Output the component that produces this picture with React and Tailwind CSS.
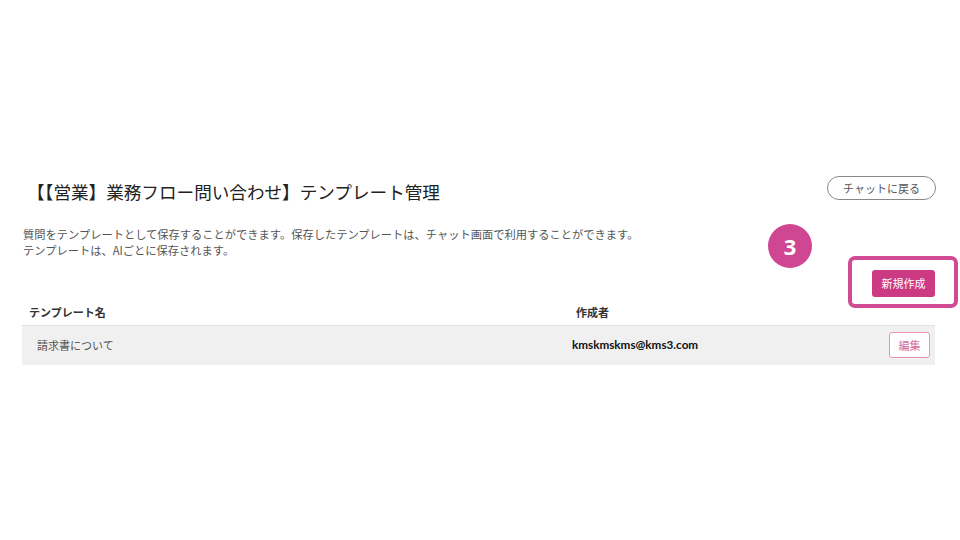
const FONT = { fontFamily: '"Noto Sans CJK JP", "Noto Sans", sans-serif' };

const rows = [{ id: 1, name: '請求書について', author: 'kmskmskms@kms3.com' }];

export default function App() {
  return (
    <div className="w-full min-h-[540px] bg-white text-[#333]" style={FONT}>
      <div className="ml-[22px] w-[913px] pt-[176px]">
        {/* header */}
        <div className="flex items-start justify-between">
          <h1 className="mt-[4px] pl-[5px] text-[17.6px] leading-[24px] font-normal text-[#222]">
            【【営業】業務フロー問い合わせ】テンプレート管理
          </h1>
          <button className="mr-[-1px] h-[24px] w-[109px] rounded-full border border-[#888] bg-white text-[11px] text-[#555]">
            チャットに戻る
          </button>
        </div>

        <div className="mt-[22px] pl-[1px] text-[11.25px] leading-[16px] text-[#555]">
          <p>質問をテンプレートとして保存することができます。保存したテンプレートは、チャット画面で利用することができます。</p>
          <p>テンプレートは、AIごとに保存されます。</p>
        </div>

        <div className="mt-[11px] flex justify-end">
          <div className="relative">
            <button className="h-[27px] w-[63px] rounded-[3px] bg-[#cd3a84] text-[11px] text-white">
              新規作成
            </button>
            {/* annotation */}
            <div className="pointer-events-none absolute left-[-24px] top-[-13px] h-[52px] w-[110px] rounded-[7px] border-[4px] border-[#d04a94]" />
            <div className="absolute left-[-104px] top-[-45px] flex h-[44px] w-[44px] items-center justify-center rounded-full bg-[#cf4692] text-[22px] font-bold text-white" style={{ fontFamily: '"Noto Sans", sans-serif' }}>
              3
            </div>
          </div>
        </div>

        {/* table */}
        <div className="mt-[7px]">
          <div className="grid grid-cols-[554px_1fr] pb-[5px] text-[11px] font-bold leading-[16px] text-[#333]">
            <div className="pl-[7px]">テンプレート名</div>
            <div>作成者</div>
          </div>
          {rows.map((r) => (
            <div key={r.id} className="grid h-[40px] grid-cols-[550px_1fr_auto] items-center border-t border-[#e2e2e2] bg-[#f0f0f0] text-[11px]">
              <div className="pl-[15px] text-[#555]">{r.name}</div>
              <div className="text-[11.7px] font-bold text-[#111]" style={{ fontFamily: 'Lato, "Noto Sans", sans-serif' }}>{r.author}</div>
              <div className="pr-[5px]">
                <button className="h-[26px] w-[41px] rounded-[3px] border border-[#e494b8] bg-white text-[11px] text-[#d46c9c]">
                  編集
                </button>
              </div>
            </div>
          ))}
        </div>
      </div>
    </div>
  );
}
